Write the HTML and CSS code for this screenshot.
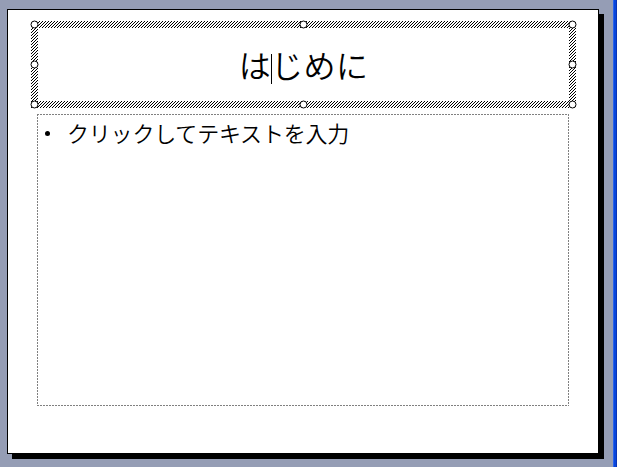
FILE: index.html
```html
<!DOCTYPE html>
<html lang="ja">
<head>
<meta charset="utf-8">
<title>はじめに</title>
<link rel="stylesheet" href="styles.css">
</head>
<body>
<div class="window">
  <div class="workspace">
    <div class="slide">
      <div class="title-frame">
        <svg class="selection" width="545" height="87" viewBox="0 0 545 87" aria-hidden="true">
          <defs>
            <pattern id="hatch" width="3" height="3" patternUnits="userSpaceOnUse">
              <rect x="2" y="0" width="1" height="1" fill="#000"/>
              <rect x="1" y="1" width="1" height="1" fill="#000"/>
              <rect x="0" y="2" width="1" height="1" fill="#000"/>
            </pattern>
          </defs>
          <path d="M0 0H545V87H0Z M7 7V80H538V7Z" fill="url(#hatch)" fill-rule="evenodd" shape-rendering="crispEdges"/>
          <g fill="#fff" stroke="#000" stroke-width="1">
            <circle cx="3.5" cy="3.5" r="3.5"/>
            <circle cx="272.5" cy="3.5" r="3.5"/>
            <circle cx="541.5" cy="3.5" r="3.5"/>
            <circle cx="3.5" cy="43.5" r="3.5"/>
            <circle cx="541.5" cy="43.5" r="3.5"/>
            <circle cx="3.5" cy="83.5" r="3.5"/>
            <circle cx="272.5" cy="83.5" r="3.5"/>
            <circle cx="541.5" cy="83.5" r="3.5"/>
          </g>
        </svg>
        <h1 class="title-text">は<span class="caret"></span>じめに</h1>
      </div>
      <div class="body-frame">
        <div class="bullet-row">
          <span class="bullet"></span>
          <span class="bullet-text">クリックしてテキストを入力</span>
        </div>
      </div>
    </div>
  </div>
  <div class="frame-edge"></div>
</div>
</body>
</html>
```

FILE: styles.css
```css
html, body {
  margin: 0;
  padding: 0;
}

body {
  width: 617px;
  height: 467px;
  overflow: hidden;
  background: #959db5;
  font-family: "Noto Sans CJK JP", "Noto Sans", sans-serif;
}

.window {
  display: flex;
  width: 617px;
  height: 467px;
}

.workspace {
  flex: 1;
  padding: 9px 0 0 7px;
}

.frame-edge {
  width: 4px;
  height: 467px;
  background: linear-gradient(90deg, #2a62ea 0 1px, #0846dc 1px 3px, #0a34b4 3px);
}

.slide {
  box-sizing: border-box;
  width: 592px;
  height: 445px;
  border: 1px solid #000;
  background: #fff;
  box-shadow: 5px 5px 0 #000;
  padding: 11px 0 0 23px;
  display: flex;
  flex-direction: column;
  align-items: flex-start;
}

.title-frame {
  position: relative;
  width: 545px;
  height: 87px;
  display: flex;
  align-items: center;
  justify-content: center;
}

.selection {
  position: absolute;
  left: 0;
  top: 0;
  overflow: visible;
}

.title-text {
  margin: 0;
  padding: 0 0 1px 0;
  font-size: 32px;
  font-weight: 350;
  line-height: 40px;
  color: #000;
  letter-spacing: 0.4px;
}

.caret {
  display: inline-block;
  width: 1px;
  height: 30px;
  margin-right: -1px;
  background: #000;
  vertical-align: -6px;
}

.body-frame {
  box-sizing: border-box;
  width: 532px;
  height: 292px;
  margin: 6px 0 0 6px;
  padding: 3px 0 0 8px;
  background:
    repeating-linear-gradient(90deg, #808080 0 2px, transparent 2px 3px) left top / 100% 1px no-repeat,
    repeating-linear-gradient(90deg, #808080 0 2px, transparent 2px 3px) left bottom / 100% 1px no-repeat,
    repeating-linear-gradient(180deg, #808080 0 2px, transparent 2px 3px) left top / 1px 100% no-repeat,
    repeating-linear-gradient(180deg, #808080 0 2px, transparent 2px 3px) right top / 1px 100% no-repeat;
}

.bullet-row {
  display: flex;
  align-items: center;
  height: 30px;
}

.bullet {
  width: 5px;
  height: 5px;
  border-radius: 50%;
  background: #000;
  margin-right: 17px;
  margin-top: 2px;
}

.bullet-text {
  font-size: 22px;
  font-weight: 350;
  line-height: 30px;
  color: #000;
  letter-spacing: -0.2px;
}
```
